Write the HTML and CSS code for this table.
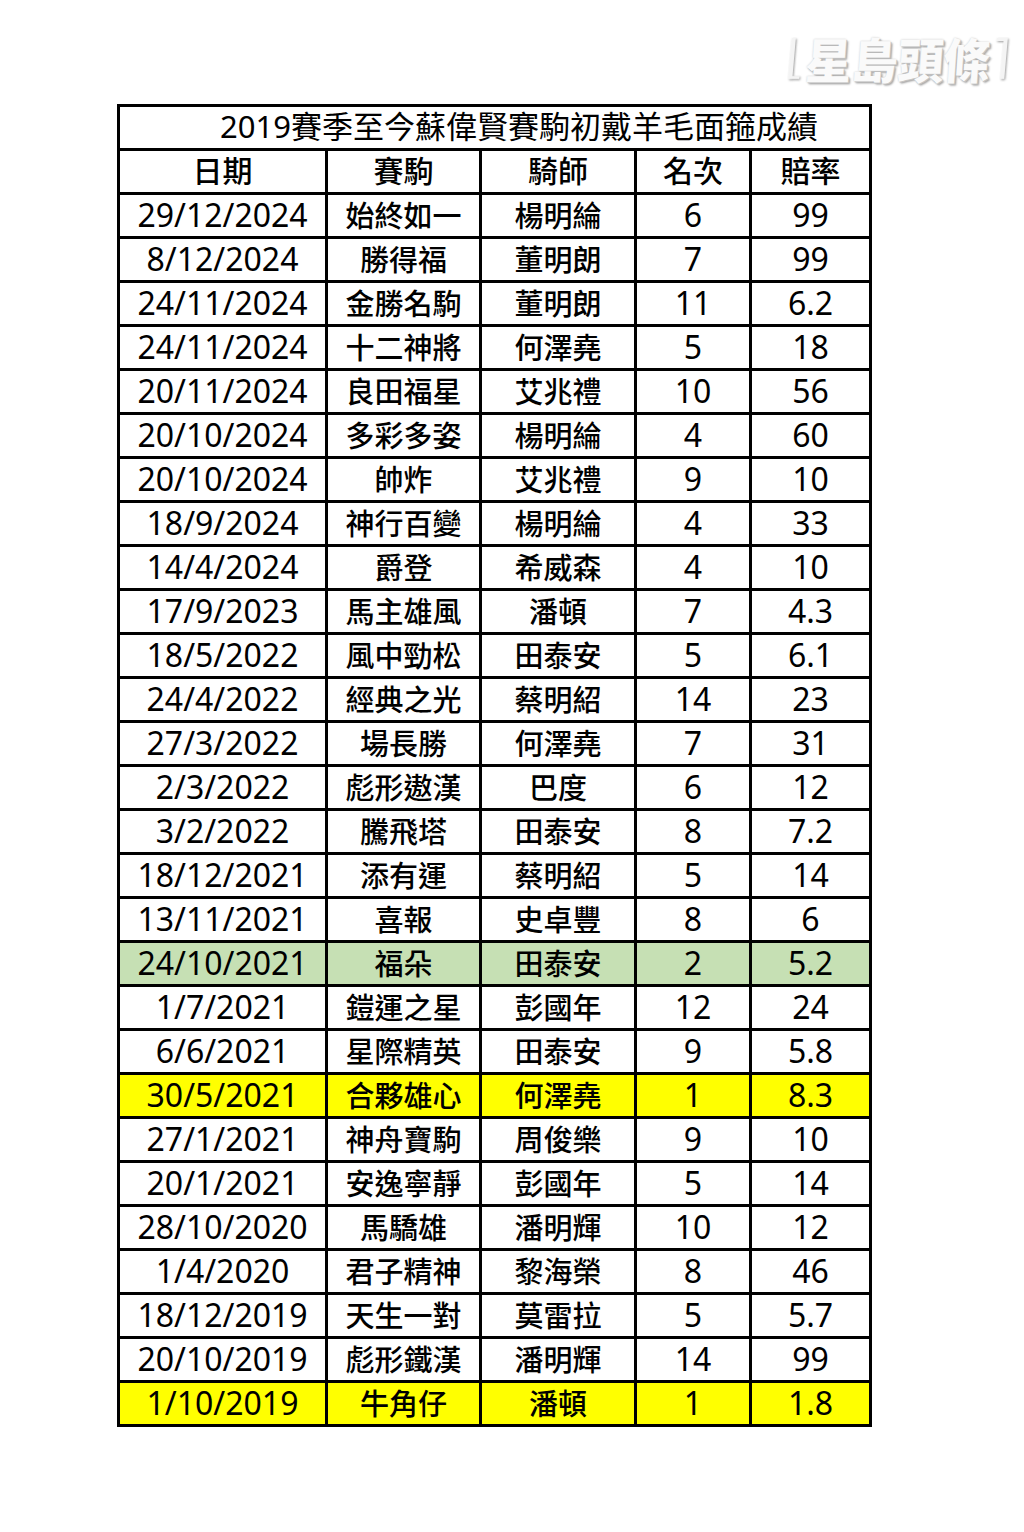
FILE: index.html
```html
<!DOCTYPE html>
<html lang="zh-Hant">
<head>
<meta charset="utf-8">
<title>2019賽季至今蘇偉賢賽駒初戴羊毛面箍成績</title>
<link rel="stylesheet" href="styles.css">
</head>
<body>
<div class="page">
  <header class="logo-bar">
    <div class="logo">
      <span class="br br-left"></span>
      <span class="logo-text">星島頭條</span>
      <span class="br br-right"></span>
    </div>
  </header>
  <table class="results">
    <colgroup>
      <col class="c1"><col class="c2"><col class="c3"><col class="c4"><col class="c5">
    </colgroup>
    <thead>
      <tr><th colspan="5" class="title">2019賽季至今蘇偉賢賽駒初戴羊毛面箍成績</th></tr>
      <tr class="head"><th>日期</th><th>賽駒</th><th>騎師</th><th>名次</th><th>賠率</th></tr>
    </thead>
    <tbody>
      <tr><td class="num">29/12/2024</td><td class="cjk">始終如一</td><td class="cjk">楊明綸</td><td class="num">6</td><td class="num">99</td></tr>
      <tr><td class="num">8/12/2024</td><td class="cjk">勝得福</td><td class="cjk">董明朗</td><td class="num">7</td><td class="num">99</td></tr>
      <tr><td class="num">24/11/2024</td><td class="cjk">金勝名駒</td><td class="cjk">董明朗</td><td class="num">11</td><td class="num">6.2</td></tr>
      <tr><td class="num">24/11/2024</td><td class="cjk">十二神將</td><td class="cjk">何澤堯</td><td class="num">5</td><td class="num">18</td></tr>
      <tr><td class="num">20/11/2024</td><td class="cjk">良田福星</td><td class="cjk">艾兆禮</td><td class="num">10</td><td class="num">56</td></tr>
      <tr><td class="num">20/10/2024</td><td class="cjk">多彩多姿</td><td class="cjk">楊明綸</td><td class="num">4</td><td class="num">60</td></tr>
      <tr><td class="num">20/10/2024</td><td class="cjk">帥炸</td><td class="cjk">艾兆禮</td><td class="num">9</td><td class="num">10</td></tr>
      <tr><td class="num">18/9/2024</td><td class="cjk">神行百變</td><td class="cjk">楊明綸</td><td class="num">4</td><td class="num">33</td></tr>
      <tr><td class="num">14/4/2024</td><td class="cjk">爵登</td><td class="cjk">希威森</td><td class="num">4</td><td class="num">10</td></tr>
      <tr><td class="num">17/9/2023</td><td class="cjk">馬主雄風</td><td class="cjk">潘頓</td><td class="num">7</td><td class="num">4.3</td></tr>
      <tr><td class="num">18/5/2022</td><td class="cjk">風中勁松</td><td class="cjk">田泰安</td><td class="num">5</td><td class="num">6.1</td></tr>
      <tr><td class="num">24/4/2022</td><td class="cjk">經典之光</td><td class="cjk">蔡明紹</td><td class="num">14</td><td class="num">23</td></tr>
      <tr><td class="num">27/3/2022</td><td class="cjk">場長勝</td><td class="cjk">何澤堯</td><td class="num">7</td><td class="num">31</td></tr>
      <tr><td class="num">2/3/2022</td><td class="cjk">彪形遨漢</td><td class="cjk">巴度</td><td class="num">6</td><td class="num">12</td></tr>
      <tr><td class="num">3/2/2022</td><td class="cjk">騰飛塔</td><td class="cjk">田泰安</td><td class="num">8</td><td class="num">7.2</td></tr>
      <tr><td class="num">18/12/2021</td><td class="cjk">添有運</td><td class="cjk">蔡明紹</td><td class="num">5</td><td class="num">14</td></tr>
      <tr><td class="num">13/11/2021</td><td class="cjk">喜報</td><td class="cjk">史卓豐</td><td class="num">8</td><td class="num">6</td></tr>
      <tr class="green"><td class="num">24/10/2021</td><td class="cjk">福朵</td><td class="cjk">田泰安</td><td class="num">2</td><td class="num">5.2</td></tr>
      <tr><td class="num">1/7/2021</td><td class="cjk">鎧運之星</td><td class="cjk">彭國年</td><td class="num">12</td><td class="num">24</td></tr>
      <tr><td class="num">6/6/2021</td><td class="cjk">星際精英</td><td class="cjk">田泰安</td><td class="num">9</td><td class="num">5.8</td></tr>
      <tr class="yellow"><td class="num">30/5/2021</td><td class="cjk">合夥雄心</td><td class="cjk">何澤堯</td><td class="num">1</td><td class="num">8.3</td></tr>
      <tr><td class="num">27/1/2021</td><td class="cjk">神舟寶駒</td><td class="cjk">周俊樂</td><td class="num">9</td><td class="num">10</td></tr>
      <tr><td class="num">20/1/2021</td><td class="cjk">安逸寧靜</td><td class="cjk">彭國年</td><td class="num">5</td><td class="num">14</td></tr>
      <tr><td class="num">28/10/2020</td><td class="cjk">馬驕雄</td><td class="cjk">潘明輝</td><td class="num">10</td><td class="num">12</td></tr>
      <tr><td class="num">1/4/2020</td><td class="cjk">君子精神</td><td class="cjk">黎海榮</td><td class="num">8</td><td class="num">46</td></tr>
      <tr><td class="num">18/12/2019</td><td class="cjk">天生一對</td><td class="cjk">莫雷拉</td><td class="num">5</td><td class="num">5.7</td></tr>
      <tr><td class="num">20/10/2019</td><td class="cjk">彪形鐵漢</td><td class="cjk">潘明輝</td><td class="num">14</td><td class="num">99</td></tr>
      <tr class="yellow"><td class="num">1/10/2019</td><td class="cjk">牛角仔</td><td class="cjk">潘頓</td><td class="num">1</td><td class="num">1.8</td></tr>
    </tbody>
  </table>
</div>
</body>
</html>
```
FILE: styles.css
```css
html, body {
  margin: 0;
  padding: 0;
  background: #ffffff;
}

.page {
  width: 1024px;
  min-height: 1532px;
  font-family: "Noto Sans", "Noto Sans CJK TC", sans-serif;
  color: #000000;
}

.logo-bar {
  height: 104px;
  box-sizing: border-box;
  display: flex;
  justify-content: flex-end;
  align-items: flex-start;
  padding: 34px 18px 0 0;
}

.logo {
  display: flex;
  align-items: center;
  height: 48px;
}

.logo-text {
  font-family: "Noto Sans CJK TC", sans-serif;
  font-weight: 900;
  font-size: 46px;
  line-height: 48px;
  letter-spacing: 0;
  color: #fafafa;
  transform: skewX(-4deg) scaleY(1.05);
  text-shadow: 1px 1px 0 #c4c4c4, 2px 2px 2px #a0a0a0, 0 0 2px #c8c8c8;
  margin: 0 5px;
}

.br {
  display: block;
  width: 7px;
  height: 38px;
  border-color: #f4f4f4;
  border-style: solid;
  border-width: 0;
  filter: drop-shadow(1px 1px 1px #9a9a9a);
  transform: skewX(-5deg);
}

.br-left {
  border-left-width: 4px;
  border-bottom-width: 3px;
}

.br-right {
  border-right-width: 4px;
  border-top-width: 3px;
}

.results {
  margin-left: 117px;
  border-collapse: separate;
  border-spacing: 0;
  table-layout: fixed;
  width: 755px;
  border-top: 3px solid #000;
  border-left: 3px solid #000;
}

.c1 { width: 208px; }
.c2 { width: 154px; }
.c3 { width: 155px; }
.c4 { width: 115px; }
.c5 { width: 120px; }

.results th,
.results td {
  height: 39px;
  padding: 0 0 2px 0;
  box-sizing: content-box;
  border-right: 3px solid #000;
  border-bottom: 3px solid #000;
  text-align: center;
  vertical-align: middle;
  white-space: nowrap;
  font-weight: normal;
  line-height: 1;
}

.results th.title {
  font-size: 31px;
  padding-left: 49px;
  font-family: "Noto Sans", "Noto Sans CJK TC", sans-serif;
}

.head th {
  height: 36px;
  padding-bottom: 5px;
  font-family: "Noto Sans CJK TC", sans-serif;
  font-size: 30px;
  font-weight: 500;
}

.results td.num {
  font-size: 32px;
  font-family: "Noto Sans", "Noto Sans CJK TC", sans-serif;
}

.results td.cjk {
  font-size: 29px;
  font-weight: 500;
  font-family: "Noto Sans CJK TC", sans-serif;
}

.green td { background: #c6e0b4; }
.yellow td { background: #ffff00; }
```
